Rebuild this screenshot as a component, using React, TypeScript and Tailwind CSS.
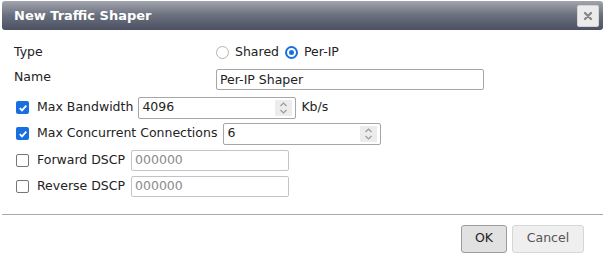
import React from "react";

const font = { fontFamily: '"DejaVu Sans", Verdana, sans-serif' };

function Spinner() {
  return (
    <div className="absolute right-[3px] top-[2px] bottom-[2px] w-[17px] bg-[#ececec] flex flex-col items-center justify-center">
      <svg width="9" height="14" viewBox="0 0 9 14" fill="none" stroke="#9a9a9a" strokeWidth="1.2">
        <path d="M1.5 5 L4.5 2 L7.5 5" />
        <path d="M1.5 9 L4.5 12 L7.5 9" />
      </svg>
    </div>
  );
}

function Check({ checked }: { checked: boolean }) {
  return checked ? (
    <span className="w-[13px] h-[13px] rounded-[2px] bg-[#1a6fe0] flex items-center justify-center shrink-0">
      <svg width="10" height="10" viewBox="0 0 10 10" fill="none" stroke="white" strokeWidth="1.8">
        <path d="M1.8 5.2 L4 7.4 L8.3 2.6" />
      </svg>
    </span>
  ) : (
    <span className="w-[13px] h-[13px] rounded-[2px] border border-[#767676] bg-white shrink-0" />
  );
}

function Radio({ checked }: { checked: boolean }) {
  return checked ? (
    <span className="w-[13px] h-[13px] rounded-full border-[2px] border-[#1a6fe0] flex items-center justify-center shrink-0">
      <span className="w-[5px] h-[5px] rounded-full bg-[#1a6fe0]" />
    </span>
  ) : (
    <span className="w-[13px] h-[13px] rounded-full border border-[#b5b5b5] shrink-0" />
  );
}

export default function App() {
  return (
    <div className="w-[605px] h-[267px] bg-white text-[12.5px] text-[#222]" style={font}>
      <div className="pt-[1px] px-[2px]">
        <div className="h-[29px] rounded-[3px] bg-gradient-to-b from-[#a3a5ae] via-[#6a6f7d] to-[#4b5162] flex items-center justify-between pl-[12px] pr-[4px]">
          <span className="text-white font-bold text-[13px]">New Traffic Shaper</span>
          <div className="w-[22px] h-[22px] rounded-[2px] bg-[#ebebeb] border border-[#d4d4d4] flex items-center justify-center">
            <svg width="10" height="10" viewBox="0 0 10 10" stroke="#888" strokeWidth="2.4" strokeLinecap="round">
              <path d="M2 2 L8 8 M8 2 L2 8" />
            </svg>
          </div>
        </div>
      </div>

      <div className="pl-[14px] pt-[14px]">
        <div className="flex items-center h-[16px]">
          <span className="w-[202px]">Type</span>
          <Radio checked={false} />
          <span className="ml-[6px]">Shared</span>
          <span className="ml-[6px]"><Radio checked={true} /></span>
          <span className="ml-[6px]">Per-IP</span>
        </div>

        <div className="flex items-center mt-[8px]">
          <span className="w-[202px] mb-[5px]">Name</span>
          <div className="w-[268px] h-[21px] border border-[#a6a6a6] rounded-[2px] flex items-center px-[3px]">Per-IP Shaper</div>
        </div>

        <div className="flex items-center mt-[5px] pl-[2px]">
          <Check checked={true} />
          <span className="ml-[8px]">Max Bandwidth</span>
          <div className="relative ml-[5px] w-[158px] h-[22px] border border-[#a6a6a6] rounded-[2px] flex items-center px-[3px]">
            4096
            <Spinner />
          </div>
          <span className="ml-[5px]">Kb/s</span>
        </div>

        <div className="flex items-center mt-[4px] pl-[2px]">
          <Check checked={true} />
          <span className="ml-[8px]">Max Concurrent Connections</span>
          <div className="relative ml-[6px] w-[158px] h-[22px] border border-[#a6a6a6] rounded-[2px] flex items-center px-[3px]">
            6
            <Spinner />
          </div>
        </div>

        <div className="flex items-center mt-[5px] pl-[2px]">
          <Check checked={false} />
          <span className="ml-[8px]">Forward DSCP</span>
          <div className="ml-[6px] w-[158px] h-[21px] border border-[#c4c4c4] rounded-[2px] flex items-center px-[3px] text-[#8a8a8a]">000000</div>
        </div>

        <div className="flex items-center mt-[5px] pl-[2px]">
          <Check checked={false} />
          <span className="ml-[8px]">Reverse DSCP</span>
          <div className="ml-[6px] w-[158px] h-[21px] border border-[#c4c4c4] rounded-[2px] flex items-center px-[3px] text-[#8a8a8a]">000000</div>
        </div>
      </div>

      <div className="mx-[2px] mt-[17px] border-t border-[#a8a8a8]" />

      <div className="flex justify-end gap-[5px] pr-[21px] pt-[10px]">
        <button className="w-[46px] h-[28px] rounded-[3px] bg-[#e1e1e1] border border-[#9c9c9c] text-[#222]">OK</button>
        <button className="w-[72px] h-[28px] rounded-[3px] bg-[#efefef] border border-[#d6d6d6] text-[#555]">Cancel</button>
      </div>
    </div>
  );
}
